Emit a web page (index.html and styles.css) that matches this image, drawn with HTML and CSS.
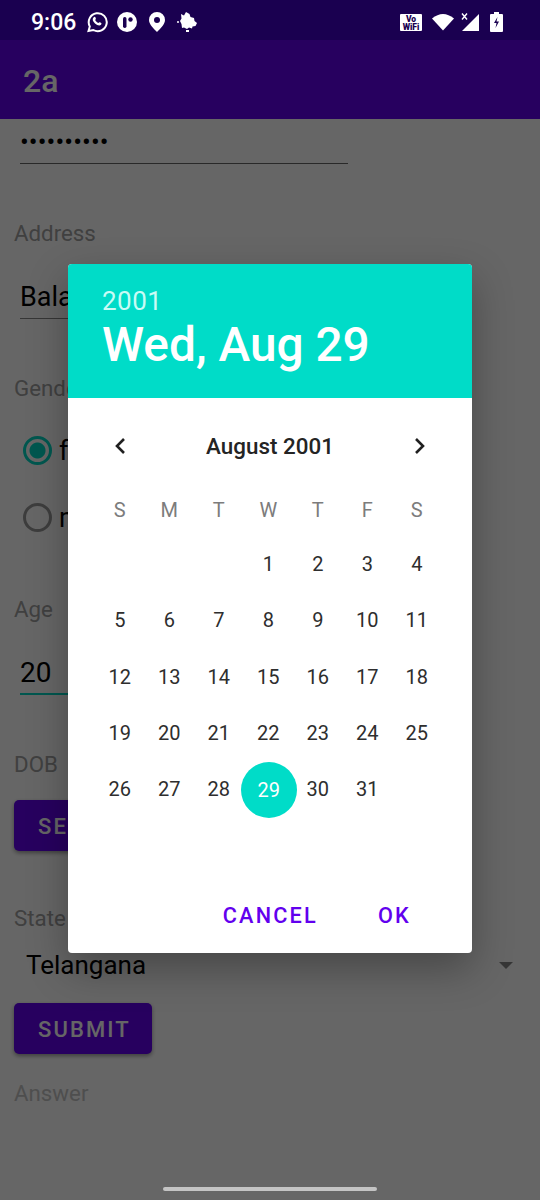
FILE: index.html
```html
<!DOCTYPE html>
<html lang="en">
<head>
    <meta charset="UTF-8">
    <meta name="viewport" content="width=device-width, initial-scale=1.0">
    <title>2a</title>
    <link rel="stylesheet" href="styles.css">
</head>
<body>
<div class="screen">
    <div class="statusbar">
        <span class="time">9:06</span>
        <div class="notif-icons">
            <svg class="wa-icon" width="22" height="22" viewBox="0 0 22 22"><path d="M2.5 20l1.3-4.6A9 9 0 1 1 7.300 19z" fill="none" stroke="#fff" stroke-width="2"/><path d="M7.500 6.500c1-1 1.700-.8 2.200.5.300.8.100 1.200-.5 1.900.6 1.300 1.800 2.500 3.200 3.100.7-.7 1.200-.8 2-.4 1.300.6 1.400 1.200.6 2.200-1.200 1.300-3.800.7-6-1.300-2.300-2.100-3-4.600-1.500-6z" fill="#fff"/></svg>
            <svg width="20" height="20" viewBox="0 0 20 20"><circle cx="10" cy="10" r="10" fill="#fff"/><rect x="6" y="5" width="3.500" height="11" rx="1.700" fill="#1a0050"/><circle cx="13.500" cy="7.500" r="2.200" fill="#1a0050"/></svg>
            <svg width="16" height="20" viewBox="0 0 16 20"><path d="M8 0a8 8 0 0 1 8 8c0 4.500-5 9-8 12-3-3-8-7.500-8-12a8 8 0 0 1 8-8z" fill="#fff"/><circle cx="8" cy="8" r="3" fill="#1a0050"/></svg>
            <svg width="22" height="22" viewBox="0 0 22 22"><path d="M4 3l3 1.500L9 1l3.500 2 1 3 3.500 1 .5 3 2.500 2-1.500 3-3 .5-.5 2-3-1-2 1.500-3-1.500-2 .5-.5-4L3 10l1.500-2.500z" fill="#fff"/><circle cx="1" cy="11" r="1" fill="#fff"/><rect x="9" y="19" width="3" height="2" fill="#fff"/></svg>
        </div>
        <div class="sys-icons">
            <span class="vowifi">Vo<br>WiFi</span>
            <svg class="wifi" width="22" height="18" viewBox="0 0 22 18"><path d="M0 5.500Q11-3.500 22 5.500L11 17.500z" fill="#fff"/></svg>
            <svg class="signal" width="19" height="19" viewBox="0 0 19 19"><path d="M18 1v17H1z" fill="#fff"/><path d="M1 .5l5 6M6 .5L1 6.500" stroke="#fff" stroke-width="1.400"/></svg>
            <svg width="13" height="20" viewBox="0 0 13 20"><path d="M4 0h5v2h3a1 1 0 0 1 1 1v16a1 1 0 0 1-1 1H1a1 1 0 0 1-1-1V3a1 1 0 0 1 1-1h3z" fill="#fff"/><path d="M7.500 5L4 11h2.500l-1 5L9 9.500H6.500z" fill="#1a0050"/></svg>
        </div>
    </div>

    <div class="appbar"><span class="app-title">2a</span></div>

    <div class="form">
        <div class="field pw-field">••••••••••</div>
        <div class="label label-address">Address</div>
        <div class="field name-field">Balaji</div>
        <div class="label label-gender">Gender</div>
        <div class="radios">
            <div class="radio-row"><span class="radio checked"></span>female</div>
            <div class="radio-row"><span class="radio"></span>male</div>
        </div>
        <div class="label label-age">Age</div>
        <div class="field age-field">20</div>
        <div class="label label-dob">DOB</div>
        <button class="btn btn-dob">SELECT</button>
        <div class="label label-state">State</div>
        <div class="spinner">
            <span>Telangana</span>
            <span class="caret"></span>
        </div>
        <button class="btn btn-submit">SUBMIT</button>
        <div class="label label-answer">Answer</div>
    </div>

    <div class="scrim">
        <div class="dialog">
            <div class="dialog-head">
                <div class="year">2001</div>
                <div class="date">Wed, Aug 29</div>
            </div>
            <div class="month-row">
                <svg width="16" height="20" viewBox="0 0 16 20"><path d="M12 3L5 10l7 7" fill="none" stroke="#202020" stroke-width="2.600"/></svg>
                <span class="month">August 2001</span>
                <svg width="16" height="20" viewBox="0 0 16 20"><path d="M4 3l7 7-7 7" fill="none" stroke="#202020" stroke-width="2.600"/></svg>
            </div>
            <div class="week">
                <span>S</span><span>M</span><span>T</span><span>W</span><span>T</span><span>F</span><span>S</span>
            </div>
            <div class="days">
                <span></span><span></span><span></span>
                <span>1</span><span>2</span><span>3</span><span>4</span>
                <span>5</span><span>6</span><span>7</span><span>8</span><span>9</span><span>10</span><span>11</span>
                <span>12</span><span>13</span><span>14</span><span>15</span><span>16</span><span>17</span><span>18</span>
                <span>19</span><span>20</span><span>21</span><span>22</span><span>23</span><span>24</span><span>25</span>
                <span>26</span><span>27</span><span>28</span><span class="selected">29</span><span>30</span><span>31</span>
            </div>
            <div class="actions">
                <a class="action">CANCEL</a>
                <a class="action">OK</a>
            </div>
        </div>
    </div>

    <div class="home-pill"></div>
</div>
</body>
</html>
```
FILE: styles.css
```css
* {
    box-sizing: border-box;
}
body {
    margin: 0;
    font-family: Roboto, sans-serif;
    background-color: #fff;
}
.screen {
    position: relative;
    width: 540px;
    height: 1200px;
    overflow: hidden;
    background-color: #fff;
}

/* status bar */
.statusbar {
    height: 40px;
    background-color: #1a0050;
    color: #fff;
    display: flex;
    align-items: center;
    padding: 4px 37px 0 31px;
}
.time {
    font-size: 23px;
    font-weight: 500;
    width: 55px;
}
.notif-icons {
    display: flex;
    align-items: center;
    gap: 12px;
}
.wa-icon {
    margin-right: -3px;
}
.sys-icons {
    margin-left: auto;
    display: flex;
    align-items: center;
    gap: 10px;
}
.wifi {
    margin-right: -3px;
}
.vowifi {
    width: 22px;
    height: 17px;
    background-color: #fff;
    color: #1a0050;
    font-size: 8.5px;
    font-weight: 900;
    line-height: 8px;
    text-align: center;
    padding-top: 1px;
    border-radius: 1px;
}

/* app bar */
.appbar {
    height: 79px;
    background-color: #6200ee;
    display: flex;
    align-items: center;
    padding: 2px 0 0 23px;
}
.app-title {
    color: #fff;
    font-size: 32px;
    font-weight: 500;
}

/* form behind the dialog */
.form {
    padding: 0 14px;
    color: #000;
}
.label {
    height: 26px;
    line-height: 27px;
    font-size: 22.3px;
    color: #a0a0a0;
}
.label-address { margin-top: 56px; }
.label-gender { margin-top: 56px; }
.label-age { margin-top: 45px; }
.label-dob { margin-top: 56px; }
.label-state { margin-top: 54px; }
.label-answer { margin-top: 26px; color: #c4c4c4; }

.field {
    font-size: 27px;
    margin-left: 6px;
    height: 47px;
    line-height: 51px;
    border-bottom: 1px solid #888;
}
.pw-field {
    width: 328px;
    height: 45px;
    line-height: 46px;
    font-size: 26px;
    letter-spacing: 0.100px;
    border-bottom: 1px solid #666;
}
.name-field {
    width: 200px;
    margin-top: 26px;
}
.age-field {
    width: 120px;
    margin-top: 26px;
    font-size: 28px;
    line-height: 50px;
    border-bottom: 2px solid #03dac5;
}

.radios {
    margin-top: 16px;
}
.radio-row {
    height: 67px;
    display: flex;
    align-items: center;
    font-size: 27px;
    padding-left: 9px;
    gap: 7px;
}
.radio {
    width: 29px;
    height: 29px;
    border-radius: 50%;
    border: 3px solid #999;
}
.radio.checked {
    border-color: #03dac5;
    background: radial-gradient(circle, #03dac5 0 7.500px, transparent 8.500px);
}

.btn {
    display: block;
    height: 51px;
    padding: 2px 24px 0;
    border: none;
    border-radius: 5px;
    background-color: #6200ee;
    color: #fff;
    font-family: Roboto, sans-serif;
    font-size: 22px;
    font-weight: 500;
    letter-spacing: 2.100px;
    box-shadow: 0 2px 4px rgba(0, 0, 0, 0.4);
}
.btn-dob { margin-top: 23px; width: 160px; text-align: left; }
.btn-submit { margin-top: 18px; width: 138px; }

.spinner {
    margin-top: 14px;
    height: 40px;
    display: flex;
    align-items: center;
    justify-content: space-between;
    padding: 0 13px 0 12px;
    font-size: 26px;
}
.caret {
    width: 0;
    height: 0;
    border-left: 7px solid transparent;
    border-right: 7px solid transparent;
    border-top: 7px solid #888;
}

/* dialog */
.scrim {
    position: absolute;
    top: 40px;
    left: 0;
    right: 0;
    bottom: 0;
    background-color: rgba(0, 0, 0, 0.6);
    padding: 224px 68px 0;
}
.dialog {
    width: 404px;
    height: 689px;
    background-color: #fff;
    border-radius: 4px;
    overflow: hidden;
    box-shadow: 0 16px 40px rgba(0, 0, 0, 0.3);
}
.dialog-head {
    height: 134px;
    background-color: #00dcc8;
    color: #fff;
    padding: 21px 0 0 34px;
}
.year {
    font-size: 26px;
    line-height: 32px;
    letter-spacing: 0.500px;
    color: #c8fbf5;
}
.date {
    font-size: 47.8px;
    font-weight: 500;
    line-height: 56px;
}
.month-row {
    height: 96px;
    display: flex;
    align-items: center;
    justify-content: space-between;
    padding: 0 44px;
}
.month {
    font-size: 22.4px;
    font-weight: 500;
    color: #242424;
}
.week, .days {
    display: grid;
    grid-template-columns: repeat(7, 49.500px);
    padding-left: 27px;
    text-align: center;
}
.week {
    height: 37px;
    font-size: 20px;
    font-weight: 400;
    color: #7c7c7c;
    line-height: 35px;
    margin-top: -1px;
}
.days {
    grid-auto-rows: 56.300px;
    margin-top: 6px;
    font-size: 20px;
    color: #2e2e2e;
}
.days span {
    display: flex;
    align-items: center;
    justify-content: center;
}
.days .selected {
    background-color: #00dcc8;
    color: #fff;
    border-radius: 50%;
    width: 56px;
    height: 56px;
    justify-self: center;
    align-self: start;
    margin: 1px 0 0 1px;
}
.actions {
    display: flex;
    justify-content: flex-end;
    gap: 60px;
    margin-top: 86px;
    padding-right: 61px;
}
.action {
    color: #6200ee;
    font-size: 21.7px;
    font-weight: 500;
    letter-spacing: 2.200px;
}

.home-pill {
    position: absolute;
    left: 163px;
    bottom: 9px;
    width: 214px;
    height: 4px;
    border-radius: 2px;
    background-color: #c4c4c4;
}
```
